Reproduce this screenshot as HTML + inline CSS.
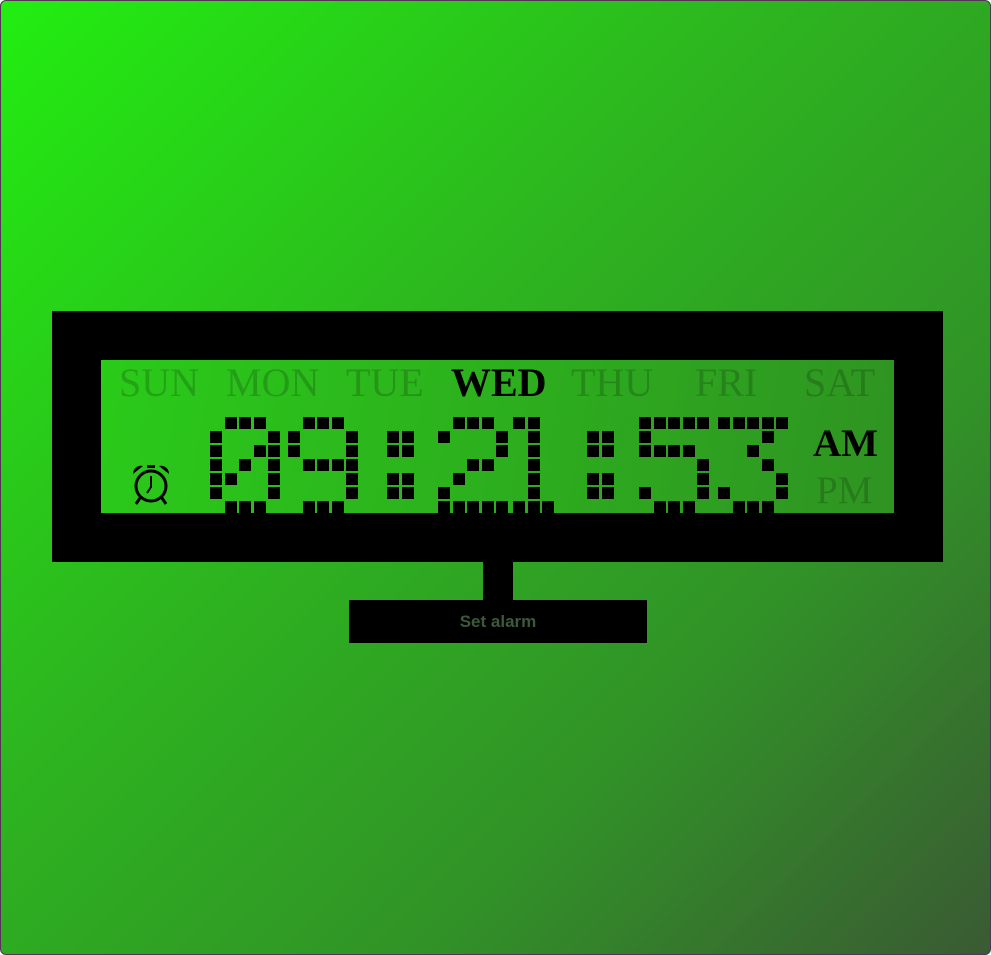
<!DOCTYPE html>
<html><head><meta charset="utf-8"><style>
html,body{margin:0;padding:0;width:991px;height:955px;overflow:hidden;background:#fff}
#bg{position:absolute;left:0;top:0;width:989px;height:953px;border:1px solid #553355;border-radius:6px;background:linear-gradient(135deg,#22ee11 0%,#2db51f 40%,#319327 70%,#3a5a33 100%)}
#frame{position:absolute;left:52px;top:311px;width:891px;height:251px;background:#000}
#lcd{position:absolute;left:101px;top:360px;width:793px;height:153px;background:linear-gradient(100deg,#2acb19,#2f9322)}
.d{position:absolute;top:361px;font:40px "Liberation Serif",serif;color:rgba(0,0,0,0.18);line-height:44px}
.on{color:#000;font-weight:bold}
.c{position:absolute;width:12px;height:12px;background:#000}
#stand{position:absolute;left:483px;top:562px;width:30px;height:38px;background:#000}
#btn{position:absolute;left:349px;top:600px;width:298px;height:43px;background:#000;color:#3b5a3b;font:bold 17px "Liberation Sans",sans-serif;text-align:center;line-height:43px}
.ap{position:absolute;left:813px;font:39px "Liberation Serif",serif;line-height:40px}
</style></head><body>
<div id="bg"></div>
<div id="frame"></div>
<div id="lcd"></div>
<div class="d" style="left:119px">SUN</div>
<div class="d" style="left:226px">MON</div>
<div class="d" style="left:346px">TUE</div>
<div class="d on" style="left:451px">WED</div>
<div class="d" style="left:571px">THU</div>
<div class="d" style="left:695px">FRI</div>
<div class="d" style="left:804px">SAT</div>
<div class="ap" style="top:424px;font-weight:bold;color:#000">AM</div>
<div class="ap" style="top:471px;color:rgba(0,0,0,0.18);left:816px">PM</div>
<svg style="position:absolute;left:128px;top:462px" width="46" height="44" viewBox="0 0 46 44">
<circle cx="23" cy="24" r="15" fill="none" stroke="#000" stroke-width="3"/>
<path d="M5 12 A8 8 0 0 1 15 4 Z" fill="#000"/><path d="M41 12 A8 8 0 0 0 31 4 Z" fill="#000"/>
<rect x="19" y="3" width="8" height="3" fill="#000"/>
<path d="M23 14 V25 L19 31" fill="none" stroke="#000" stroke-width="2"/>
<path d="M12 36 L8 42 M34 36 L38 42" stroke="#000" stroke-width="3"/>
</svg>
<div id="digits"></div>
<script>
var G={
'0':[".###.","#...#","#..##","#.#.#","##..#","#...#",".###."],
'9':[".###.","#...#","#...#",".####","....#","....#",".###."],
'2':[".###.","#...#","....#","..##.",".#...","#....","#####"],
'1':["##...",".#...",".#...",".#...",".#...",".#...","###.."],
'5':["#####","#....","####.","....#","....#","#...#",".###."],
'3':["#####","...#.","..#..","...#.","....#","#...#",".###."],
':':[".....","##...","##...",".....","##...","##...","....."]
};
var items=[['0',210],['9',288],[':',387],['2',438],['1',513],[':',587],['5',639],['3',718]];
var h='';
items.forEach(function(it){var g=G[it[0]];for(var r=0;r<7;r++)for(var c=0;c<5;c++)if(g[r][c]=='#')h+='<div class="c" style="left:'+Math.round(it[1]+c*14.6)+'px;top:'+(417+r*14)+'px"></div>';});
document.getElementById('digits').innerHTML=h;
</script>
<div id="stand"></div>
<div id="btn">Set alarm</div>
</body></html>
